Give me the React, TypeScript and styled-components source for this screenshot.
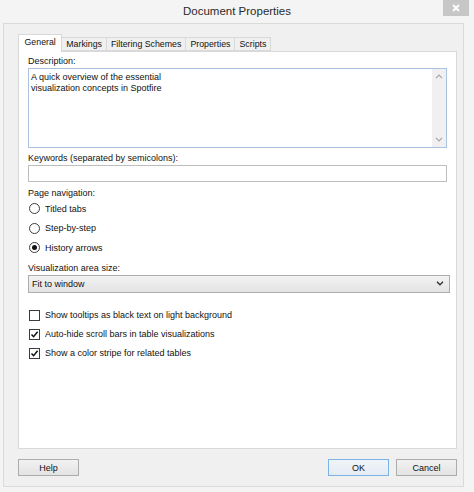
import styled, { createGlobalStyle } from "styled-components";

const GlobalStyle = createGlobalStyle`
  html, body {
    margin: 0;
    padding: 0;
    background: #f4f4f4;
  }
  body {
    font-family: "Liberation Sans", Arial, sans-serif;
    font-size: 9px;
    color: #111;
  }
`;

const Window = styled.div`
  width: 474px;
  height: 492px;
  display: flex;
  flex-direction: column;
  background: #f4f4f4;
  box-sizing: border-box;
`;

const TitleBar = styled.div`
  height: 23px;
  display: grid;
  grid-template-columns: 1fr auto 1fr;
  align-items: start;
`;

const Title = styled.div`
  grid-column: 2;
  font-size: 11.5px;
  line-height: 23px;
  color: #2b2b2b;
`;

const CloseButton = styled.div`
  grid-column: 3;
  justify-self: end;
  margin-right: 5px;
  width: 26px;
  height: 16px;
  background: #c7c7c7;
  display: flex;
  align-items: center;
  justify-content: center;
`;

const Client = styled.div`
  flex: 1;
  margin: 0 10px 5px 3px;
  border: 1px solid #dadada;
  background: #f0f0f0;
  padding: 10px 6px 10px 14px;
  display: flex;
  flex-direction: column;
`;

const TabRow = styled.div`
  display: flex;
  align-items: flex-end;
  height: 17px;
  position: relative;
  z-index: 1;
`;

const Tab = styled.div<{ $active?: boolean }>`
  box-sizing: border-box;
  height: ${({ $active }) => ($active ? "18px" : "14px")};
  margin-bottom: ${({ $active }) => ($active ? "-1px" : "0")};
  padding: 0 ${({ $active }) => ($active ? "5.5px" : "4px")};
  border: 1px solid #d9d9d9;
  border-bottom: ${({ $active }) => ($active ? "none" : "1px solid #d9d9d9")};
  margin-left: ${({ $active }) => ($active ? "0" : "-1px")};
  background: ${({ $active }) => ($active ? "#ffffff" : "#f0f0f0")};
  line-height: ${({ $active }) => ($active ? "15px" : "12px")};
  font-size: 8.8px;
  white-space: nowrap;
  &:first-child {
    margin-left: 0;
  }
`;

const Panel = styled.div`
  flex: 1;
  background: #ffffff;
  border: 1px solid #d9d9d9;
  padding: 4px 9px 0 9px;
  display: flex;
  flex-direction: column;
`;

const Label = styled.div<{ $gap?: number }>`
  line-height: 11px;
  margin-top: ${({ $gap }) => $gap ?? 0}px;
`;

const TextArea = styled.div`
  margin-top: 1px;
  height: 80px;
  box-sizing: border-box;
  border: 1px solid #a9c3df;
  display: flex;
`;

const TextBody = styled.div`
  flex: 1;
  padding: 3px 2px;
  line-height: 11px;
`;

const ScrollBar = styled.div`
  width: 14px;
  background: #f0f0f0;
  display: flex;
  flex-direction: column;
  justify-content: space-between;
  align-items: center;
  padding: 5px 0;
`;

const TextInput = styled.div`
  margin-top: 1px;
  height: 17px;
  box-sizing: border-box;
  border: 1px solid #bdbdbd;
`;

const OptionRow = styled.div<{ $height?: number }>`
  height: ${({ $height }) => $height ?? 19.5}px;
  display: flex;
  align-items: center;
  gap: 5px;
  padding-left: 1px;
`;

const Radio = styled.div<{ $checked?: boolean }>`
  width: 11px;
  height: 11px;
  box-sizing: border-box;
  border-radius: 50%;
  border: 1px solid #3c3c3c;
  background: #ffffff;
  display: flex;
  align-items: center;
  justify-content: center;
  &::after {
    content: "";
    width: 5px;
    height: 5px;
    border-radius: 50%;
    background: ${({ $checked }) => ($checked ? "#111" : "transparent")};
  }
`;

const Check = styled.div`
  width: 11px;
  height: 11px;
  box-sizing: border-box;
  border: 1px solid #3c3c3c;
  background: #ffffff;
  display: flex;
  align-items: center;
  justify-content: center;
`;

const Select = styled.div`
  margin: 1px -3px 0 0;
  height: 18px;
  box-sizing: border-box;
  border: 1px solid #adadad;
  background: linear-gradient(#f3f3f3, #e3e3e3);
  display: flex;
  align-items: center;
  justify-content: space-between;
  padding: 0 5px 0 3px;
`;

const Checks = styled.div`
  margin-top: 13px;
`;

const ButtonRow = styled.div`
  margin-top: 10px;
  display: flex;
  align-items: center;
`;

const Spacer = styled.div`
  flex: 1;
`;

const Button = styled.div<{ $primary?: boolean; $gap?: number }>`
  width: 61px;
  height: 17px;
  box-sizing: border-box;
  margin-left: ${({ $gap }) => $gap ?? 0}px;
  border: 1px solid ${({ $primary }) => ($primary ? "#7bb3e8" : "#acacac")};
  background: ${({ $primary }) =>
    $primary ? "linear-gradient(#f1f5fa, #e4ebf3)" : "linear-gradient(#f2f2f2, #e3e3e3)"};
  display: flex;
  align-items: center;
  justify-content: center;
`;

const Chevron = ({ up }: { up?: boolean }) => (
  <svg width="8" height="5" viewBox="0 0 8 5">
    <path
      d={up ? "M1 4.2 L4 1.2 L7 4.2" : "M1 0.8 L4 3.8 L7 0.8"}
      fill="none"
      stroke="#a6a6a6"
      strokeWidth="1.2"
    />
  </svg>
);

const Tick = () => (
  <svg width="9" height="9" viewBox="0 0 9 9">
    <path d="M1.5 4.5 L3.6 6.7 L7.6 1.8" fill="none" stroke="#111" strokeWidth="1.5" />
  </svg>
);

export default function App() {
  return (
    <Window>
      <GlobalStyle />
      <TitleBar>
        <Title>Document Properties</Title>
        <CloseButton>
          <svg width="8" height="8" viewBox="0 0 8 8">
            <path d="M1 1 L7 7 M7 1 L1 7" stroke="#fff" strokeWidth="1.8" />
          </svg>
        </CloseButton>
      </TitleBar>

      <Client>
        <TabRow>
          <Tab $active>General</Tab>
          <Tab>Markings</Tab>
          <Tab>Filtering Schemes</Tab>
          <Tab>Properties</Tab>
          <Tab>Scripts</Tab>
        </TabRow>

        <Panel>
          <Label>Description:</Label>
          <TextArea>
            <TextBody>
              A quick overview of the essential
              <br />
              visualization concepts in Spotfire
            </TextBody>
            <ScrollBar>
              <Chevron up />
              <Chevron />
            </ScrollBar>
          </TextArea>

          <Label $gap={5}>Keywords (separated by semicolons):</Label>
          <TextInput />

          <Label $gap={6}>Page navigation:</Label>
          <OptionRow>
            <Radio />
            Titled tabs
          </OptionRow>
          <OptionRow>
            <Radio />
            Step-by-step
          </OptionRow>
          <OptionRow>
            <Radio $checked />
            History arrows
          </OptionRow>

          <Label $gap={5}>Visualization area size:</Label>
          <Select>
            Fit to window
            <svg width="8" height="5" viewBox="0 0 8 5">
              <path d="M1 0.8 L4 3.8 L7 0.8" fill="none" stroke="#333" strokeWidth="1.4" />
            </svg>
          </Select>

          <Checks>
            <OptionRow $height={19}>
              <Check />
              Show tooltips as black text on light background
            </OptionRow>
            <OptionRow $height={19}>
              <Check>
                <Tick />
              </Check>
              Auto-hide scroll bars in table visualizations
            </OptionRow>
            <OptionRow $height={19}>
              <Check>
                <Tick />
              </Check>
              Show a color stripe for related tables
            </OptionRow>
          </Checks>
        </Panel>

        <ButtonRow>
          <Button>Help</Button>
          <Spacer />
          <Button $primary>OK</Button>
          <Button $gap={7}>Cancel</Button>
        </ButtonRow>
      </Client>
    </Window>
  );
}
